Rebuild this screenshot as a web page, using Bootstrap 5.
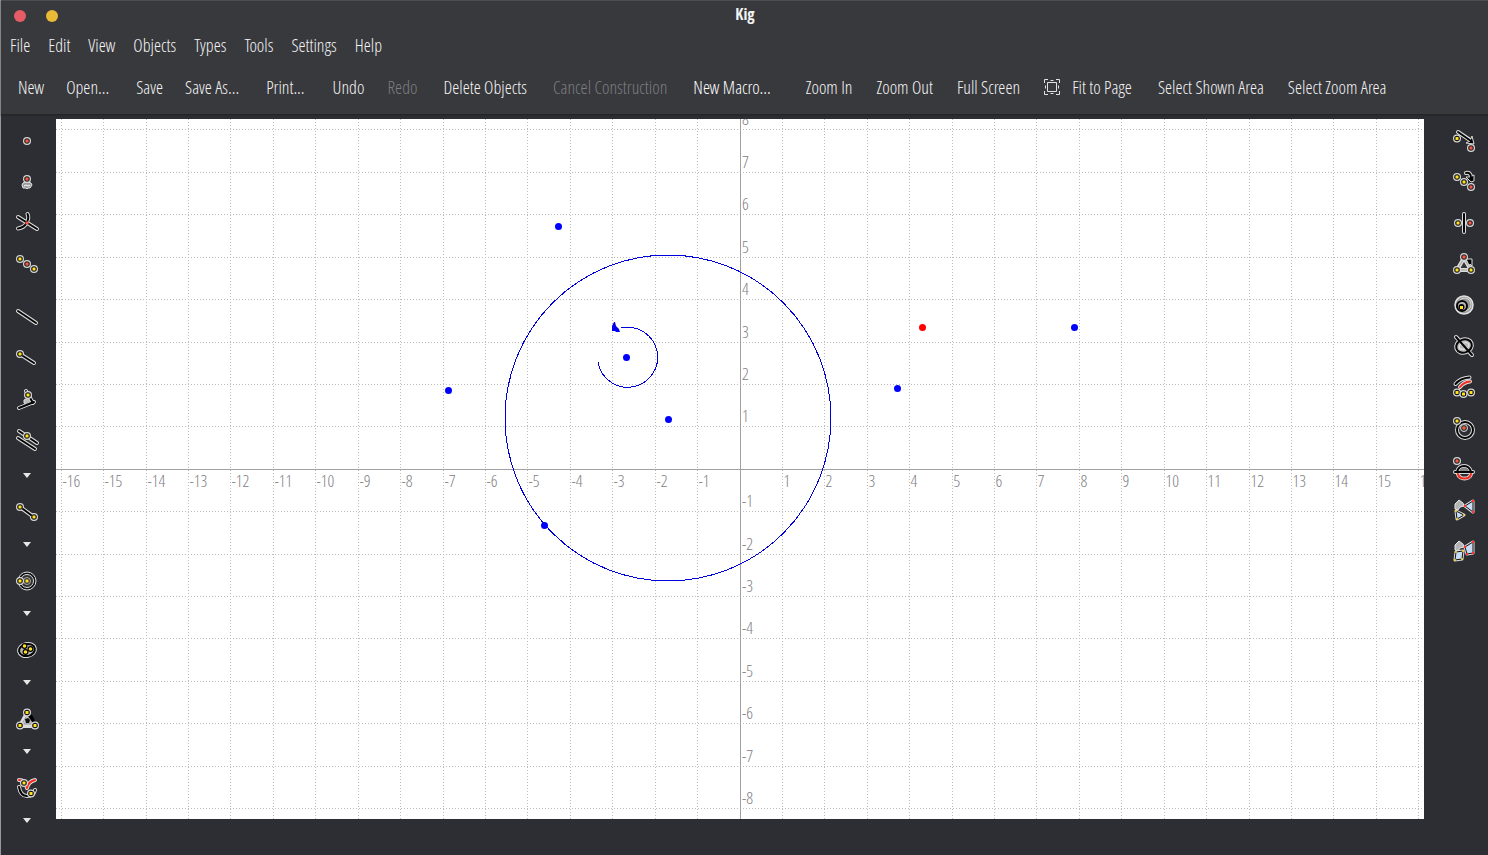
<!DOCTYPE html>
<html lang="en">
<head>
<meta charset="utf-8">
<meta name="viewport" content="width=device-width, initial-scale=1">
<title>Kig</title>
<link href="https://cdn.jsdelivr.net/npm/bootstrap@5.3.0/dist/css/bootstrap.min.css" rel="stylesheet">
<style>
  body { font-family: "Ubuntu Condensed", "Open Sans Condensed Light", "Liberation Sans Narrow", sans-serif; font-size: 18px; line-height: 20px; color: #f4f4f4; background: #2d2e33; }
  .kig-window { border-left: 1px solid #97989a; }
  .kig-head { background: #38393d; border-top: 1px solid #4b4e52; border-bottom: 1px solid #25262a; box-shadow: 0 1px 1px #28292d; }
  .kig-title { display: grid; grid-template-columns: 64px 1fr 64px; height: 27px; padding: 0 12px 0 13px; align-items: center; }
  .kig-title h1 { font-family: "Open Sans Condensed", sans-serif; font-size: 16px; line-height: 20px; font-weight: 700; padding-bottom: 2px; }
  .win-btns { gap: 20px; padding-top: 2px; }
  .win-btn { width: 12px; height: 12px; border: 0; padding: 0; border-radius: 50%; }
  .win-close { background: #e65c64; }
  .win-min { background: #e9ba36; }
  .kig-menu { height: 32px; padding-top: 1px; }
  .kig-menu .nav-link { color: inherit; padding: 0 9px; }
  .kig-tools { height: 54px; padding: 0 6px; }
  .kig-tools button { border: 0; background: none; color: inherit; padding: 0 11px; white-space: nowrap; }
  .kig-tools .roomy { padding: 0 12px; }
  .kig-tools .roomier { padding: 0 13px; }
  .kig-tools button:disabled { color: #7c7d81; }
  .kig-tools .strong { color: #fff; }
  .kig-tools .sep { margin-left: 5px; }
  .kig-tools .sep-short { margin-left: 2px; }
  .kig-tools .sep-wide { margin-left: 10px; }
  .kig-side { width: 55px; padding-top: 5px; }
  .kig-side-right { width: 64px; padding-left: 14px; }
  .tool { height: 41px; width: 52px; padding: 0; border: 0; background: none; display: flex; align-items: center; justify-content: center; }
  .tool svg { width: 24px; height: 24px; overflow: visible; }
  .more { height: 23px; width: 52px; padding: 2px 0 0; border: 0; background: none; display: flex; align-items: center; justify-content: center; margin-bottom: 5px; }
  .more::before { content: ""; border: 4px solid transparent; border-top: 5px solid #e6e6e6; border-bottom: 0; }
  .rule { height: 12px; }
  .rule-thin { height: 3px; }
  .kig-canvas { background: #fff; margin: 4px 0 36px; }
  .kig-canvas svg { width: 100%; height: 100%; }
  .gridline { stroke: #bcbcbc; stroke-dasharray: 1 2; shape-rendering: crispEdges; }
  .axis { stroke: #a0a0a4; shape-rendering: crispEdges; }
  .tick { fill: #808084; font-size: 17px; }
  .figure-line { fill: none; stroke: #00d; shape-rendering: crispEdges; }
  .w { fill: none; stroke: #dcdcdc; stroke-width: 4; stroke-linecap: round; stroke-linejoin: round; }
  .k { fill: none; stroke: #050505; stroke-width: 2; stroke-linecap: round; stroke-linejoin: round; }
  .r { fill: none; stroke: #f52a1c; stroke-width: 2; stroke-linecap: round; stroke-linejoin: round; }
  .head { fill: #000; stroke: #dcdcdc; stroke-width: 1; stroke-linejoin: round; }
  .filled-light { fill: #bbb; }
</style>
</head>
<body>
<svg width="0" height="0" class="position-absolute" aria-hidden="true">
  <defs>
    <g id="dotY"><circle r="4" fill="#d8d8d8"/><circle r="2.8" fill="#111"/><rect x="-1.5" y="-1.5" width="3" height="3" rx=".5" fill="#ffe11f"/></g>
    <g id="dotR"><circle r="4" fill="#d8d8d8"/><circle r="2.8" fill="#222"/><rect x="-1.5" y="-1.5" width="3" height="3" rx=".5" fill="#fb5643"/></g>
  </defs>
</svg>
<div class="kig-window vh-100 d-flex flex-column">
  <header class="kig-head">
    <div class="kig-title">
      <div class="win-btns d-flex">
        <button class="win-btn win-close" aria-label="Close"></button>
        <button class="win-btn win-min" aria-label="Minimize"></button>
      </div>
      <h1 class="m-0 text-center">Kig</h1>
    </div>
    <nav class="kig-menu nav align-items-center">
      <a class="nav-link" href="#">File</a><a class="nav-link" href="#">Edit</a><a class="nav-link" href="#">View</a><a class="nav-link" href="#">Objects</a><a class="nav-link" href="#">Types</a><a class="nav-link" href="#">Tools</a><a class="nav-link" href="#">Settings</a><a class="nav-link" href="#">Help</a>
    </nav>
    <div class="kig-tools d-flex align-items-center" role="toolbar" aria-label="Main toolbar">
      <button>New</button>
      <button>Open...</button>
      <button class="sep">Save</button>
      <button>Save As...</button>
      <button class="sep">Print...</button>
      <button class="sep roomy">Undo</button>
      <button disabled>Redo</button>
      <button class="sep-short roomier">Delete Objects</button>
      <button class="roomier" disabled>Cancel Construction</button>
      <button class="strong roomier">New Macro...</button>
      <button class="sep-wide roomy">Zoom In</button>
      <button class="roomy">Zoom Out</button>
      <button class="roomy">Full Screen</button>
      <button class="roomy d-flex align-items-center gap-2"><svg width="20" height="16" fill="none" stroke="#e2e2e2"><path d="M.5 4V.5H4M12 .5h3.500V4M15.500 12v3.500H12M4 15.500H.500V12M3.500 3.500h9v9h-9zM6.500 1.500h3M6.500 14.500h3M1.500 6.500v3M14.500 6.500v3"/></svg>Fit to Page</button>
      <button class="sep-short roomy">Select Shown Area</button>
      <button class="roomy">Select Zoom Area</button>
    </div>
  </header>
  <main class="d-flex flex-grow-1">
    <div class="kig-side flex-shrink-0" role="toolbar" aria-label="Objects">
      <button class="tool" aria-label="Point"><svg><use href="#dotR" x="12" y="12"/></svg></button>
      <button class="tool" aria-label="Label"><svg><path d="M8 13l2-1h4l2 1 1 2-2 3h-2l-1 1-1-1H8l-1-3z" fill="#999" stroke="#e4e4e4"/><path d="M9 16l2-1 2 1 2-1" stroke="#fff" fill="none"/><use href="#dotR" x="12" y="9"/></svg></button>
      <button class="tool" aria-label="Intersection"><svg><path class="w" d="M3 6l19 12M12.500 3c2 4 0 7-1 9-2 4-5 5-8.500 5.500"/><path class="k" d="M3 6l19 12M12.500 3c2 4 0 7-1 9-2 4-5 5-8.500 5.500"/><rect x="10.500" y="10.500" width="3" height="3" fill="#fb5643"/></svg></button>
      <button class="tool" aria-label="Midpoint"><svg><use href="#dotY" x="5" y="7"/><use href="#dotY" x="19" y="17"/><use href="#dotR" x="12" y="12"/></svg></button>
      <div class="rule"></div>
      <button class="tool" aria-label="Line"><svg><path class="w" d="M3 6l18 12"/><path class="k" d="M3 6l18 12"/></svg></button>
      <button class="tool" aria-label="Half-line"><svg><path class="w" d="M5 8l14 9"/><use href="#dotY" x="5" y="8"/><path class="k" d="M8 10l11 7"/></svg></button>
      <button class="tool" aria-label="Perpendicular"><svg><path class="w" d="M11 4l7 12M4 21l15-6"/><path d="M9 13l4-2 3 4-4 3-3-2z" fill="#bbb" stroke="#ddd"/><path class="k" d="M11 4l7 12M4 21l15-6"/><use href="#dotY" x="13" y="8"/></svg></button>
      <button class="tool" aria-label="Parallel"><svg><path class="w" d="M4 3l18 12M3 10l17 11"/><path class="k" d="M4 3l18 12M3 10l17 11"/><use href="#dotY" x="12" y="8"/></svg></button>
      <div class="rule-thin"></div>
      <button class="more" aria-label="More lines"></button>
      <button class="tool" aria-label="Segment"><svg><path class="w" d="M5 7l14 10"/><use href="#dotY" x="5" y="7"/><use href="#dotY" x="19" y="17"/><path class="k" d="M8 9l8 6"/></svg></button>
      <button class="more" aria-label="More segments"></button>
      <button class="tool" aria-label="Circle"><svg><circle cx="12" cy="12" r="9" fill="#111" stroke="#dcdcdc"/><circle cx="12" cy="12" r="6.500" fill="#333" stroke="#dcdcdc"/><circle cx="12" cy="12" r="3.500" fill="none" stroke="#aaa"/><use href="#dotY" x="5" y="12"/><rect x="10.500" y="10.500" width="3" height="3" fill="#ffe11f"/></svg></button>
      <button class="more" aria-label="More circles"></button>
      <button class="tool" aria-label="Conic"><svg><g transform="rotate(-12 12 12)"><ellipse class="w" cx="12" cy="12" rx="8" ry="6"/><ellipse class="k filled-light" cx="12" cy="12" rx="8" ry="6"/></g><g><circle cx="9.500" cy="8" r="3"/><circle cx="15.500" cy="11" r="3"/><circle cx="10.500" cy="14" r="3"/></g><g fill="#ffe11f"><circle cx="9.500" cy="8" r="1.800"/><circle cx="15.500" cy="11" r="1.800"/><circle cx="10.500" cy="14" r="1.800"/></g></svg></button>
      <button class="more" aria-label="More conics"></button>
      <button class="tool" aria-label="Polygon"><svg><path d="M12 6L5 19h15z" fill="#b8b8b8" stroke="#dcdcdc" stroke-width="4" stroke-linejoin="round"/><path d="M12 8l-5 9h10z" fill="none" stroke="#999"/><path d="M14 6q6 3 6 11l-3-2-4-6z"/><path d="M10 12l3-1 2 2-1 3-3 0z" fill="#111"/><use href="#dotY" x="12" y="5.500"/><use href="#dotY" x="5" y="18.500"/><use href="#dotY" x="20" y="18.500"/></svg></button>
      <button class="more" aria-label="More polygons"></button>
      <button class="tool" aria-label="Curve"><svg><path class="w" d="M4 4c5 0 7 3 8 8 1-5 4-7 8-8M4 11c1 6 4 9 8 9 5 0 7-2 8-6"/><path class="k" d="M4 11c1 6 4 9 8 9 5 0 7-2 8-6"/><path class="r" d="M4 4c5 0 7 3 8 8 1-5 4-7 8-8"/><use href="#dotY" x="9" y="7"/><use href="#dotY" x="16" y="17.500"/></svg></button>
      <button class="more" aria-label="More curves"></button>
    </div>
    <div class="kig-canvas flex-grow-1 position-relative overflow-hidden" id="canvas">
      <svg class="position-absolute top-0 start-0" id="plot" role="img" aria-label="Geometry canvas">
        <g id="grid"></g>
        <g id="figure">
          <circle class="figure-line" cx="-72" cy="-51" r="163"/>
          <path class="figure-line" d="M-142 -107A30 30 0 1 0 -119 -141"/>
          <path d="M-128-138v-5l2-4h1l1 4 3 3 1 3h-4l-1-1z" fill="#00e"/>
        </g>
      </svg>
    </div>
    <div class="kig-side kig-side-right flex-shrink-0" role="toolbar" aria-label="Transformations">
      <button class="tool" aria-label="Translate"><svg><path class="w" d="M6 3l12 8"/><path class="head" d="M20 7l2 8-8-1 4-2z"/><path class="k" d="M6 3l13 9"/><use href="#dotY" x="5" y="9.500"/><use href="#dotR" x="19" y="19"/></svg></button>
      <button class="tool" aria-label="Rotate"><svg><path class="w" d="M14 3q5-1 5 5"/><path class="head" d="M14 7l4 0 4-2v6l-3 1z"/><path class="k" d="M14 3q5-1 5 5"/><use href="#dotY" x="5" y="7"/><use href="#dotY" x="12" y="12"/><use href="#dotR" x="19" y="17"/></svg></button>
      <button class="tool" aria-label="Reflect"><svg><use href="#dotY" x="6" y="12"/><use href="#dotR" x="18" y="12"/><path class="w" d="M12 3v18"/><path class="k" d="M12 3v18"/></svg></button>
      <button class="tool" aria-label="Scale"><svg><path d="M12 6L5 18h14z" fill="#333" stroke="#ddd" stroke-width="4" stroke-linejoin="round"/><path d="M12 6L5 18h14z" fill="none" stroke="#999"/><path class="head" d="M14 7h6v7l-2-2-1 2-1-3z"/><use href="#dotR" x="12" y="5"/><use href="#dotY" x="5" y="18"/><use href="#dotY" x="19" y="18"/></svg></button>
      <button class="tool" aria-label="Invert"><svg><circle cx="12" cy="12" r="9" fill="#999" stroke="#e2e2e2" stroke-width="1.500"/><circle cx="12.500" cy="11.500" r="6.500" fill="none" stroke="#ddd"/><circle class="k filled-light" cx="10" cy="13" r="5"/><circle cx="9.500" cy="14" r="3"/><rect x="8" y="13" width="3" height="3" fill="#ffe11f"/></svg></button>
      <button class="tool" aria-label="Project"><svg><g transform="rotate(-20 12 12)"><ellipse class="w" cx="12" cy="12" rx="8" ry="6.500"/><ellipse class="k filled-light" cx="12" cy="12" rx="8" ry="6.500"/><ellipse cx="12" cy="12" rx="5" ry="3" fill="none" stroke="#eee"/></g><path class="w" d="M4 3l2 2M18 19l2 2"/><path class="k" d="M4 3l16 18"/></svg></button>
      <button class="tool" aria-label="Arc"><svg><path class="w" d="M3.500 9q5-6 14-6.500M8 12q4-5 10-5.500"/><path class="k" d="M3.500 9q5-6 14-6.500"/><path class="r" d="M8 12q4-5 10-5.500"/><use href="#dotY" x="5" y="17.500"/><use href="#dotY" x="11.500" y="19"/><use href="#dotY" x="19" y="17.500"/></svg></button>
      <button class="tool" aria-label="Center"><svg><circle class="w" cx="13" cy="14" r="8"/><circle class="k" cx="13" cy="14" r="8"/><circle cx="12" cy="12" r="3.500" fill="#333" stroke="#d8d8d8"/><circle cx="12" cy="12" r="1.700" fill="#fb5643"/><use href="#dotY" x="5" y="5"/></svg></button>
      <button class="tool" aria-label="Polar"><svg><path class="w" d="M3 15h18M5 15c2-8 12-8 14 0M6 17c1 6 12 6 13 0"/><path d="M7 14q5-7 10 0z" fill="#888"/><path class="r" d="M6 17c1 6 12 6 13 0"/><path class="k" d="M3 15h18M5 15c2-8 12-8 14 0"/><use href="#dotR" x="5" y="4"/></svg></button>
      <button class="tool" aria-label="Similarity"><svg><path d="M3 11V6l4-4 4 3 1 3-4 1-2 3z" fill="#b5b5b5" stroke="#e6e6e6"/><g stroke-linejoin="round"><path d="M13 8l8-5v11z" fill="none" stroke="#ddd" stroke-width="3"/><path d="M13 8l8-5v11z" fill="#c6dcf5" stroke="#111"/><path d="M4 13l8 4-7 4z" fill="none" stroke="#ddd" stroke-width="3"/><path d="M4 13l8 4-7 4z" fill="#c6dcf5" stroke="#111"/></g><g fill="#f33"><circle cx="13" cy="8" r="1.200"/><circle cx="21" cy="3" r="1.200"/><circle cx="21" cy="14" r="1.200"/></g><g fill="#fd2"><circle cx="4" cy="13" r="1"/><circle cx="12" cy="17" r="1"/><circle cx="5" cy="21" r="1"/></g></svg></button>
      <button class="tool" aria-label="Projectivity"><svg><path d="M3 11V6l4-4 4 3 1 3-4 1-2 3z" fill="#b5b5b5" stroke="#e6e6e6"/><g stroke-linejoin="round"><path d="M13 8l8-5v11l-6 1z" fill="none" stroke="#ddd" stroke-width="3"/><path d="M13 8l8-5v11l-6 1z" fill="#c6dcf5" stroke="#111"/><path d="M4 13l7-1-1 8-7 1z" fill="none" stroke="#ddd" stroke-width="3"/><path d="M4 13l7-1-1 8-7 1z" fill="#c6dcf5" stroke="#111"/></g><g fill="#f33"><circle cx="13" cy="8" r="1.200"/><circle cx="21" cy="3" r="1.200"/><circle cx="21" cy="14" r="1.200"/><circle cx="15" cy="15" r="1.200"/></g><g fill="#fd2"><circle cx="4" cy="13" r="1"/><circle cx="11" cy="12" r="1"/><circle cx="10" cy="20" r="1"/><circle cx="3" cy="21" r="1"/></g></svg></button>
    </div>
  </main>
</div>
<script src="https://cdn.jsdelivr.net/npm/bootstrap@5.3.0/dist/js/bootstrap.bundle.min.js"></script>
<script>
  const NS = 'http://www.w3.org/2000/svg', UNIT = 42.42;
  const box = document.getElementById('canvas'), grid = document.getElementById('grid'), figure = document.getElementById('figure');
  const points = [[-182,-243],[-292,-79],[-114,-112],[-72,-50],[-196,56],[182,-142,1],[157,-81],[334,-142]];
  function add(parent, name, attrs, text) {
    const el = document.createElementNS(NS, name);
    for (const k in attrs) el.setAttribute(k, attrs[k]);
    if (text !== undefined) el.textContent = text;
    parent.append(el);
  }
  function line(x1, y1, x2, y2, cls) { add(grid, 'line', {x1, y1, x2, y2, class: cls}); }
  function draw() {
    const w = box.clientWidth, h = box.clientHeight, ox = Math.round(w / 2), oy = Math.round(h / 2);
    grid.replaceChildren();
    for (let k = -Math.floor(ox / UNIT); k * UNIT < w - ox; k++) {
      const x = Math.floor(ox + k * UNIT) + .5;
      if (k) { line(x, 0, x, h, 'gridline'); add(grid, 'text', {x: x + 1, y: oy + 18, class: 'tick'}, k); }
    }
    for (let k = -Math.floor(oy / UNIT); k * UNIT < h - oy; k++) {
      const y = Math.floor(oy + .3 + k * UNIT) + .5;
      if (k) { line(0, y, w, y, 'gridline'); add(grid, 'text', {x: ox + 2, y: y - 5, class: 'tick'}, -k); }
    }
    line(0, oy + .5, w, oy + .5, 'axis');
    line(ox + .5, 0, ox + .5, h, 'axis');
    figure.setAttribute('transform', `translate(${ox} ${oy})`);
  }
  points.forEach(([x, y, free]) => add(figure, 'circle', {cx: x + .5, cy: y + .5, r: 3.5, fill: free ? '#f00' : '#00f'}));
  draw();
  addEventListener('resize', draw);
</script>
</body>
</html>
